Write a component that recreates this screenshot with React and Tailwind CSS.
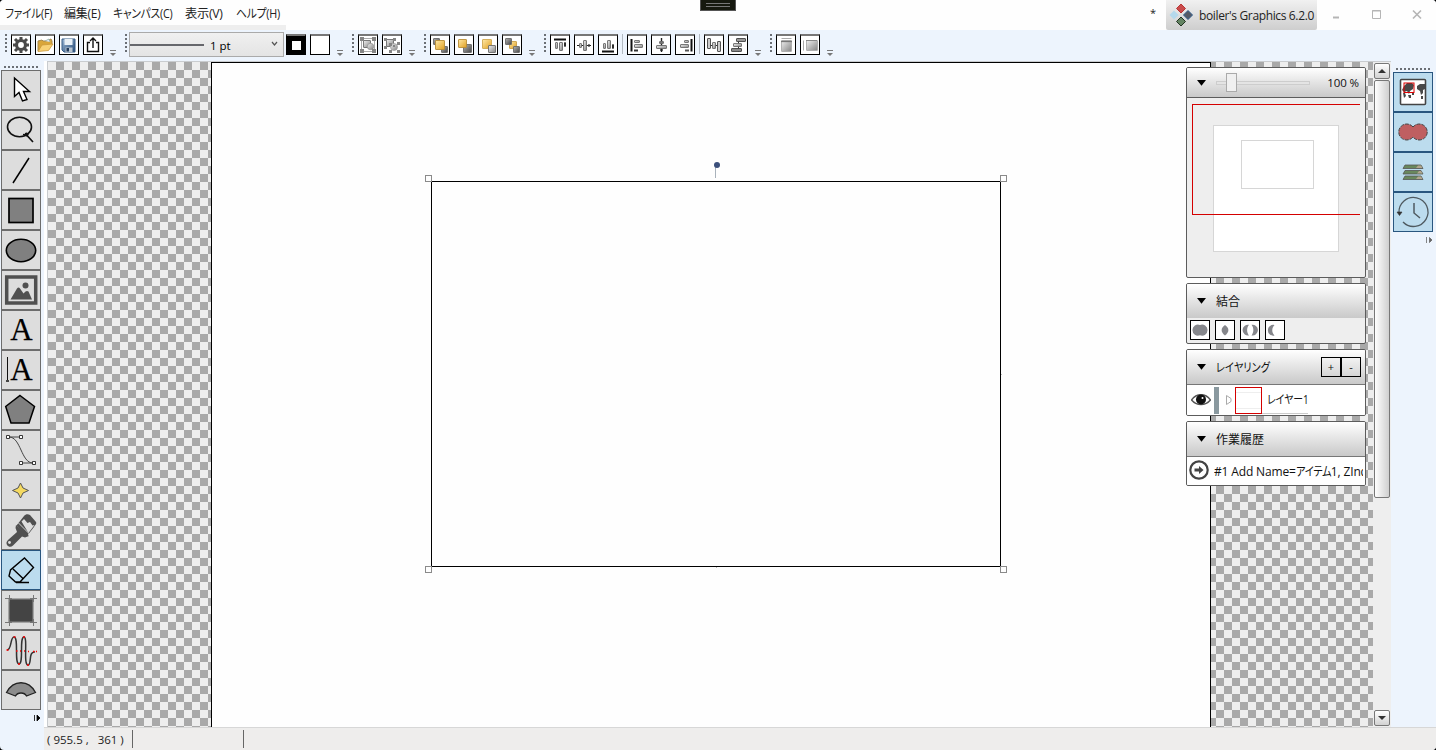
import React from "react";

const S = ({ w = 20, h = w, vb, children, className = "" }) => (
  <svg width={w} height={h} viewBox={vb || `0 0 ${w} ${h}`} fill="none" className={`block shrink-0 ${className}`}>
    {children}
  </svg>
);

const Defs = () => (
  <svg width="0" height="0" className="absolute">
    <defs>
      <linearGradient id="gray" x1="0" y1="0" x2="1" y2="1">
        <stop offset="0" stopColor="#f0f0f0" />
        <stop offset="1" stopColor="#858585" />
      </linearGradient>
      <linearGradient id="dark" x1="0" y1="0" x2="1" y2="1">
        <stop offset="0" stopColor="#b5b5b5" />
        <stop offset="1" stopColor="#444" />
      </linearGradient>
      <linearGradient id="gold" x1="0" y1="0" x2="1" y2="1">
        <stop offset="0" stopColor="#ffe9a8" />
        <stop offset="1" stopColor="#e0a021" />
      </linearGradient>
      <linearGradient id="blue" x1="0" y1="0" x2="1" y2="1">
        <stop offset="0" stopColor="#9db9d6" />
        <stop offset="1" stopColor="#274b77" />
      </linearGradient>
    </defs>
  </svg>
);

const Grip = () => (
  <div className="flex h-[18px] w-[2px] shrink-0 flex-col gap-[2px]">
    {[0, 1, 2, 3, 4].map((i) => (
      <div key={i} className="h-[2px] w-[2px] shrink-0 bg-[#6b6f75]" />
    ))}
  </div>
);

const Overflow = () => (
  <S w={8} h={24} className="ml-[1px] mr-[5px]">
    <path d="M2 16.500h6" stroke="#777" />
    <path d="M2 19h6l-3 3z" fill="#777" />
  </S>
);

const Sep = () => <div className="h-5 w-px shrink-0 bg-[#b3bac2]" />;

const Btn = ({ children }) => (
  <button className="flex h-[21px] w-5 shrink-0 items-center justify-center border border-t-2 border-black border-t-[#777] bg-white">
    {children}
  </button>
);

const Sq = ({ x, y, s = 7, h = s, f = "url(#gray)", st = "#6a6a6a" }) => (
  <rect x={x + 0.5} y={y + 0.5} width={s} height={h} rx=".4" fill={f} stroke={st} strokeWidth=".9" />
);

const I = ({ children }) => <S w={18} h={18}>{children}</S>;

const group1 = [
  <I>
    <circle cx="9" cy="9" r="4.500" stroke="#4a4a4a" strokeWidth="3.200" />
    <path d="M9 1v3M9 14v3M1 9h3M14 9h3M3 3l2.500 2.500M12.500 12.500l2.500 2.500M3 15l2.500-2.500M12.500 5.500l2.500-2.500" stroke="#4a4a4a" strokeWidth="3" />
  </I>,
  <I>
    <path d="M2 15V5l4-1 1 1h3l5-2 1 2v4" fill="#d9a63a" stroke="#a5884d" />
    <path d="M9 5l4-2 1 3" fill="#dce8f5" stroke="#8aa" strokeWidth=".7" />
    <path d="M2 15.500L6 9l11-1-4.500 6.500z" fill="#f8d277" stroke="#cb9838" strokeWidth=".8" />
  </I>,
  <I>
    <path d="M2 3h13v13H4l-2-2z" fill="url(#blue)" stroke="#345a85" />
    <path d="M4.500 3h8v6h-8z" fill="#e9f0f6" />
    <path d="M5.500 11.500h7V16h-7z" fill="#b8c4cf" />
    <path d="M6.500 12h2.500v3.500H6.500z" fill="#223b5c" />
  </I>,
  <I>
    <path d="M6 6.500H3.500v9h11v-9H12M9 12V2M6 5l3-3 3 3" stroke="#111" strokeWidth="1.400" />
  </I>,
];

const group3 = [
  <I>
    <Sq x={4} y={4} s={7} />
    <circle cx="11.500" cy="10.500" r="3.200" fill="url(#gray)" stroke="#888" strokeWidth=".7" />
    <path d="M5 2.500h8M5 15.500h8M2.500 5v8M15.500 5v8" stroke="#aaa" />
    <path d="M1 1h4v4H1zM13 1h4v4h-4zM1 13h4v4H1zM13 13h4v4h-4z" fill="#858585" />
  </I>,
  <I>
    <Sq x={3} y={3} s={7} />
    <circle cx="11" cy="11" r="3.500" fill="url(#gray)" stroke="#999" strokeWidth=".7" />
    <path d="M1 2h3v3H1zM10 2h3v3h-3zM1 10h3v3H1zM6 7h3v3H6zM14 6h3v3h-3zM6 14h3v3H6zM14 14h3v3h-3zM10 9h2v2h-2z" fill="#858585" />
  </I>,
];

const group4 = [
  <I>
    <Sq x={2} y={2} s={6} f="url(#dark)" />
    <Sq x={10} y={10} s={6} f="url(#dark)" />
    <Sq x={4} y={4} s={9} f="url(#gold)" st="#b98d35" />
  </I>,
  <I>
    <Sq x={8} y={8} s={8} f="url(#dark)" />
    <Sq x={3} y={3} s={8} f="url(#gold)" st="#b98d35" />
  </I>,
  <I>
    <Sq x={3} y={3} s={9} f="url(#gold)" st="#d0a850" />
    <Sq x={9} y={9} s={7} f="url(#gray)" />
  </I>,
  <I>
    <Sq x={6} y={5} s={7} f="url(#gold)" st="#c99e46" />
    <Sq x={2} y={2} s={6} f="url(#dark)" />
    <Sq x={10} y={10} s={6} f="url(#dark)" />
  </I>,
];

const group5a = [
  <I>
    <path d="M3 3.500h12" stroke="#111" strokeWidth="2" />
    <Sq x={4} y={6} s={2} h={6} /><Sq x={8} y={6} s={3} h={8} /><Sq x={13} y={6} s={1} h={4} f="#222" st="#222" />
  </I>,
  <I>
    <path d="M2 9.500h14" stroke="#222" />
    <Sq x={4} y={7} s={2} h={4} /><Sq x={8} y={4} s={3} h={10} /><Sq x={13} y={8} s={1} h={2} f="#222" st="#333" />
  </I>,
  <I>
    <path d="M3 15.500h12" stroke="#111" strokeWidth="2" />
    <Sq x={4} y={7} s={2} h={5} /><Sq x={8} y={4} s={3} h={8} /><Sq x={13} y={8} s={1} h={4} f="#222" st="#222" />
  </I>,
];
const group5b = [
  <I>
    <path d="M3.500 3v12.500" stroke="#111" strokeWidth="2" />
    <Sq x={6} y={4} s={5} h={2} /><Sq x={6} y={8} s={8} h={3} /><path d="M6 14.500h4" stroke="#333" strokeWidth="2" />
  </I>,
  <I>
    <path d="M9.500 2v14" stroke="#222" strokeWidth="1.400" />
    <Sq x={7} y={5} s={4} h={2} f="#777" /><Sq x={4} y={9} s={10} h={3} /><Sq x={8} y={13} s={2} h={1} f="#222" st="#222" />
  </I>,
  <I>
    <path d="M15.500 3v12.500" stroke="#111" strokeWidth="2" />
    <Sq x={8} y={4} s={4} h={2} /><Sq x={4} y={8} s={8} h={3} /><path d="M9 14.500h4" stroke="#555" strokeWidth="2" />
  </I>,
];
const group5c = [
  <I>
    <path d="M2 9.500h14" stroke="#333" />
    <Sq x={2} y={2} s={3} h={10} f="#ccc" st="#444" /><Sq x={7} y={6} s={3} h={6} /><Sq x={12} y={5} s={3} h={10} f="#ccc" st="#444" />
  </I>,
  <I>
    <path d="M9.500 2v14" stroke="#333" />
    <Sq x={7} y={2} s={9} h={3} f="#999" st="#444" /><Sq x={4} y={7} s={8} h={3} /><Sq x={2} y={12} s={10} h={3} f="#888" st="#444" />
  </I>,
];
const group6 = [
  <I>
    <path d="M4.500 2.500h10" stroke="#aaa" />
    <Sq x={4} y={4} s={10} h={11} st="#aaa" />
    <path d="M4 5.500h11" stroke="#777" strokeWidth="1.300" />
  </I>,
  <I>
    <path d="M2.500 4.500v10" stroke="#aaa" />
    <Sq x={5} y={4} s={11} h={10} st="#aaa" />
    <path d="M5 4.500h11" stroke="#888" />
  </I>,
];

const btns = (list) => list.map((icon, i) => <Btn key={i}>{icon}</Btn>);

const Toolbar = () => (
  <div className="flex h-[31px] shrink-0 items-start gap-1 pl-[5px] pt-1">
    <Grip />{btns(group1)}<Overflow />
    <div className="mr-[-2px]"><Grip /></div>
    <div className="mt-[-2px] mr-[-2px] flex h-[25px] w-[155px] shrink-0 items-center border border-[#aaa] bg-gradient-to-b from-[#f0f0f0] to-[#e4e4e4] text-black">
      <div className="mt-px h-[2px] w-[74px] bg-[#66676c]" />
      <span className="ml-[6px] pt-[2px] text-[11.500px]">1 pt</span>
      <S w={7} h={7} className="ml-auto mr-[5px] mb-[3px]"><path d="M1 2l2.500 3L6 2" stroke="#555" strokeWidth="1.200" /></S>
    </div>
    <Btn>
      <div className="flex h-[18px] w-[18px] items-center justify-center bg-black">
        <div className="h-[9px] w-[9px] bg-white" />
      </div>
    </Btn>
    <Btn />
    <Overflow />
    <Grip />{btns(group3)}<Overflow />
    <Grip />{btns(group4)}<Overflow />
    <Grip />{btns(group5a)}<Sep />{btns(group5b)}<Sep />{btns(group5c)}<Overflow />
    <Grip />{btns(group6)}<Overflow />
  </div>
);

const T = ({ children }) => <S w={38} h={38}>{children}</S>;
const Letter = () => (
  <text x="19.500" y="29" textAnchor="middle" fontFamily="Liberation Serif, serif" fontSize="31" fill="#000" stroke="#000" strokeWidth=".25">A</text>
);

const tools = [
  <T><path d="M12.500 7v18.500l4.500-4 3.500 8.500 4.500-1.500-3.500-8h6z" fill="#fff" stroke="#000" strokeWidth="1.400" /></T>,
  <T>
    <ellipse cx="17.500" cy="16" rx="12" ry="9.700" stroke="#111" strokeWidth="1.600" />
    <path d="M21 23.500l4 1 6 6.500" stroke="#111" strokeWidth="1.700" /><circle cx="24.500" cy="23.500" r="2" fill="#111" />
  </T>,
  <T><path d="M11 32L27 7" stroke="#000" strokeWidth="1.500" /></T>,
  <T><rect x="7" y="7.500" width="24" height="24" fill="#808080" stroke="#000" strokeWidth="1.700" /></T>,
  <T><ellipse cx="19" cy="19.500" rx="14.700" ry="11.200" fill="#808080" stroke="#000" strokeWidth="1.600" /></T>,
  <T>
    <rect x="4.700" y="6" width="29" height="26" stroke="#505050" strokeWidth="3.500" />
    <path d="M8.500 28.500l6.500-11c1-1.300 2-1.300 3 0l3.500 5 2-2c1-.8 2-.8 3 0l3.500 8z" fill="#505050" />
    <circle cx="23.500" cy="14.500" r="3" fill="#505050" />
  </T>,
  <T><Letter /></T>,
  <T><Letter /><path d="M5.500 6v23" stroke="#111" /><path d="M4 30h3" stroke="#111" strokeWidth="1.500" /></T>,
  <T><path d="M18 4.500L32.500 15.500 27 32H9L3.700 15.500z" fill="#808080" stroke="#000" strokeWidth="1.500" /></T>,
  <T>
    <path d="M7 6c12 0 12 26 24 26M7 6h12M19 32h12" stroke="#444" />
    <path d="M4.500 4.500h3v3h-3zM17.500 4.500h3v3h-3zM17.500 30.500h3v3h-3zM30.500 30.500h3v3h-3z" fill="#fff" stroke="#222" strokeWidth=".9" />
  </T>,
  <T><path d="M18.500 12l2.500 5 5.500 2.500-5.500 2.500-2.500 5-2.500-5-5.500-2.500 5.500-2.500z" fill="#f5da61" stroke="#555" /></T>,
  <T>
    <path d="M14.500 14.500L22 5c1.500-2 4-2.300 6-1l6 7c1 2-1 3-2 5l-7 9z" fill="#505050" />
    <path d="M19.500 10.500l2.500-2.500 3.500 4 2.500-1 2.500 3.500 2-.5-6 8z" fill="#ddd" />
    <path d="M14 14l13 11-4 1.500-3-1-9 9c-2 2-4.500 1.500-6-.5-1-2-.5-3.500 1-5l9-8-1.500-4z" fill="#505050" />
    <path d="M16.500 12l11 11" stroke="#ddd" strokeWidth=".9" /><circle cx="7.500" cy="31.500" r="1.400" fill="#ddd" />
  </T>,
  <T>
    <path d="M22.500 7l9 9.500L18 31h-4.500L7 25l1.500-6zM11 18l10 9.500M14 31.500h13" stroke="#000" strokeWidth="1.400" />
  </T>,
  <T>
    <rect x="7" y="8" width="24" height="23" fill="#444" stroke="#808080" strokeWidth="1.200" />
    <path d="M3 7.500h7M28 7.500h7M3 31.500h7M28 31.500h7M7.500 4v7M31.500 4v7M7.500 28v7M31.500 28v7" stroke="#777" />
  </T>,
  <T>
    <path d="M5 19c5 0 3-13 7-13 5 0 0 27 5 27s0-27 5-27c4 0-1 28 4 28 4 0 0-14 7-13" stroke="#333" strokeWidth="1.500" />
    <path d="M4.500 19h2M11.500 6h2M16 33h2M21 6h2M25 34h2M31 20.500h1.500M34 20.500h1M14 20h1.500M18 20h1M22 20h1M26 20.500h1" stroke="#f00" strokeWidth="1.400" />
  </T>,
  <T><path d="M4.500 21.500c7-13 22-13 29 0l-9 3.500c-2-4-9-4-11 0z" fill="#8c8c8c" stroke="#222" strokeWidth="1.300" /></T>,
];

const HGrip = () => (
  <div className="flex h-[2px] gap-[2px]">
    {Array.from({ length: 9 }, (_, i) => (
      <div key={i} className="h-[2px] w-[2px] bg-[#6b6f75]" />
    ))}
  </div>
);

const LeftBar = () => (
  <div className="flex w-[44px] shrink-0 flex-col pl-px">
    <div className="flex h-[9px] items-start pl-[3px] pt-[5px]"><HGrip /></div>
    {tools.map((icon, i) => (
      <button key={i} className={i === 12
        ? "flex h-10 w-10 shrink-0 items-center justify-center border border-[#29567f] bg-[#bcdcee]"
        : "flex h-10 w-10 shrink-0 items-center justify-center border border-[#6d6d6d] bg-[#ddd]"}>
        {icon}
      </button>
    ))}
    <S w={8} h={8} className="ml-8 mt-1"><path d="M1.500 1v6M4 1l3 3-3 3z" fill="#000" stroke="#000" strokeWidth=".8" /></S>
  </div>
);

const sideIcons = [
  <T>
    <rect x="6.500" y="6.500" width="25" height="25" rx="1" fill="#fff" stroke="#444" strokeWidth="1.600" />
    <path d="M10 13l3-3h5l2 2-1 4-3 2-1 3-2-3-3 1-2-2zM23 13l3-2h5v5l-2 1v3l-2 2-1-4-3-2zM14 22h3v3h-2zM9 20h2l1 3-2 2zM27 23h2v3h-2zM18 20h2v2h-2z" fill="#484848" />
    <rect x="10" y="10" width="10" height="9.500" stroke="#e00000" />
  </T>,
  <T>
    <path d="M19 14a8 8 0 1 0 0 10a8 8 0 1 0 0-10z" fill="#bf5f61" stroke="#444" strokeDasharray="4 1" />
  </T>,
  <T>
    <g fill="#69885d" stroke="#555" strokeWidth=".8">
      <path d="M9 15.500l2-3.500h16l2 3.500zM9 21l2-3.500h16l2 3.500zM9 26.500l2-3.500h16l2 3.500z" />
    </g>
    <path d="M22 15l2-2.500h3l1.500 2.500zM23 20.500l2-2.500h2l1.500 2.500zM22 26l2-2.500h3l1.500 2.500z" fill="#b2a68e" />
  </T>,
  <T>
    <path d="M5 20a14.500 14.500 0 1 1 4 9" stroke="#4f5a60" strokeWidth="1.300" />
    <path d="M3 19h5l-2.500 3.500z" fill="#333" stroke="#333" strokeWidth=".6" /><path d="M20 10v10l6 5" stroke="#4f5a60" strokeWidth="1.500" />
  </T>,
];

const RightBar = () => (
  <div className="flex w-[43px] shrink-0 flex-col">
    <div className="flex h-[11px] items-start pl-[3px] pt-[7px]"><HGrip /></div>
    {sideIcons.map((icon, i) => (
      <button key={i} className="flex h-10 w-10 shrink-0 items-center justify-center border border-[#29567f] bg-[#bcdcee]">
        {icon}
      </button>
    ))}
    <S w={8} h={8} className="ml-8 mt-1"><path d="M1.500 1v6M4.500 1.500l2.500 2.500-2.500 2.500z" fill="#666" stroke="#666" strokeWidth=".8" /></S>
  </div>
);

const Tri = () => <S w={9} h={6}><path d="M0 0h9L4.500 5.800z" fill="#000" /></S>;

const Header = ({ children, className }) => (
  <div className={`flex shrink-0 items-center bg-gradient-to-b from-white to-[#c9c9c9] pl-[10px] ${className}`}>
    <Tri />
    {children}
  </div>
);

const Panel = ({ children, className }) => (
  <section className={`flex flex-col overflow-hidden rounded-[2px] border border-[#5c5c5c] bg-[#eee] ${className}`}>{children}</section>
);

const combine = [
  <S w={18}><path d="M9 4a5.500 5.500 0 1 0 0 10.200a5.500 5.500 0 1 0 0-10.200z" fill="#85868b" /></S>,
  <S w={18}><path d="M9 4c4.500 3 4.500 7 0 10.500c-4.500-3.500-4.500-7.500 0-10.500z" fill="#85868b" /></S>,
  <S w={18}>
    <path d="M8 3.800a5.400 5.400 0 1 0 0 10.600c-2.500-3-2.500-7.600 0-10.600zM10.500 3.800a5.400 5.400 0 1 1 0 10.600c2.500-3 2.500-7.600 0-10.600z" fill="#85868b" />
  </S>,
  <S w={18}><path d="M8.500 4a5.400 5.400 0 1 0 0 10.500c-3-3-3-7.500 0-10.500z" fill="#85868b" /></S>,
];

const Panels = () => (
  <div className="absolute left-[1138px] top-[5px] flex w-[180px] flex-col gap-[5px] text-[12px] text-[#111]">
    <Panel className="h-[211px]">
      <Header className="h-[30px] border-b border-[#5c5c5c]">
        <div className="relative ml-[10px] flex h-[19px] w-[94px] items-center">
          <div className="h-1 w-full border border-[#cdcdcd] bg-[#e4e4e4]" />
          <div className="absolute left-[10px] top-0 h-[19px] w-[11px] border border-[#aaa] bg-[#f0f0f0]" />
        </div>
        <span className="ml-auto mr-[6px] whitespace-pre pt-px text-[11.500px] tracking-[-0.1px]">100 %</span>
      </Header>
      <div className="relative flex-1">
        <div className="absolute left-[26px] top-[27px] h-[127px] w-[126px] border border-[#d6d6d6] bg-white" />
        <div className="absolute left-[54px] top-[42px] h-[49px] w-[73px] border border-[#d6d6d6]" />
        <div className="absolute left-[5px] top-[6px] h-[111px] w-[168px] border border-r-0 border-[#d40000]" />
      </div>
    </Panel>
    <Panel className="h-[61px]">
      <Header className="h-[34px]"><span className="ml-[10px] pt-[2px]">結合</span></Header>
      <div className="flex gap-[5px] pl-[3px] pt-[2px]">
        {combine.map((icon, i) => (
          <button key={i} className="flex h-5 w-5 items-center justify-center border border-black bg-white">{icon}</button>
        ))}
      </div>
    </Panel>
    <Panel className="h-[67px]">
      <Header className="h-[35px] border-b border-[#777]">
        <span className="ml-[10px] origin-left scale-x-[0.85] whitespace-nowrap pt-[2px] [font-feature-settings:'palt']">レイヤリング</span>
        <div className="ml-auto mr-[4px] flex text-[11px]">
          <button className="flex h-5 w-5 items-center justify-center border border-black pt-px">+</button>
          <button className="flex h-5 w-5 items-center justify-center border border-black pt-px">-</button>
        </div>
      </Header>
      <div className="flex flex-1 items-center bg-white pl-1">
        <S w={20} h={14}>
          <path d="M.5 7c5-7 14-7 19 0c-5 6-14 6-19 0z" stroke="#555" strokeWidth="1.400" />
          <circle cx="10" cy="6.500" r="5" fill="#111" /><circle cx="11.500" cy="5" r="1" fill="#fff" />
        </S>
        <div className="ml-[3px] h-[27px] w-[5px] bg-[#8a999f]" />
        <S w={6} h={10} className="ml-[7px]"><path d="M.5.500v9L5 6.500v-3z" stroke="#aaa" /></S>
        <div className="ml-[3px] h-[27px] w-[27px] shrink-0 bg-[#d40000] p-px">
          <div className="flex h-full flex-col justify-center bg-white">
            <div className="h-px bg-[#eee]" />
            <div className="h-[15px]" />
            <div className="h-px bg-[#eee]" />
          </div>
        </div>
        <div className="flex h-[27px] w-[46px] items-center border-b border-[#ccc] pl-[5px]">
          <span className="origin-left scale-x-[0.82] whitespace-nowrap pt-px [font-feature-settings:'palt']">レイヤー1</span>
        </div>
      </div>
    </Panel>
    <Panel className="h-[65px]">
      <Header className="h-[35px] border-b border-[#777]"><span className="ml-[10px] pt-[2px]">作業履歴</span></Header>
      <div className="flex flex-1 items-center overflow-hidden bg-white pl-[2px] pr-[2px]">
        <S w={20} className="mb-[2px]">
          <circle cx="10" cy="10" r="8.700" stroke="#444" strokeWidth="2.200" />
          <path d="M5.500 8.500H10V6l4.500 4-4.500 4v-2.500H5.500z" fill="#444" />
        </S>
        <div className="ml-[5px] w-[149px] overflow-hidden whitespace-nowrap pt-px tracking-[-0.15px] [font-feature-settings:'palt']">
          #1 Add Name=<span className="mr-[-7px] inline-block origin-left scale-x-[0.84]">アイテム</span>1, ZInde
        </div>
      </div>
    </Panel>
  </div>
);

const Handle = ({ className }) => <div className={`absolute h-[7px] w-[7px] border border-[#8a8a8a] ${className}`} />;

const Canvas = () => (
  <div className="relative w-[1325px] shrink-0 overflow-hidden bg-[#eee] bg-[conic-gradient(#eeeeee_25%,#a9a9a9_0_50%,#eeeeee_0_75%,#a9a9a9_0)] bg-[length:16px_16px] bg-[position:8px_0px]">
    <div className="ml-[163px] h-full w-[1000px] border border-b-0 border-black bg-[#fefefe]" />
    <div className="absolute left-[383px] top-[119px] h-[386px] w-[570px] border border-black" />
    <Handle className="left-[377px] top-[113px]" />
    <Handle className="left-[952px] top-[113px]" />
    <Handle className="left-[377px] top-[504px]" />
    <Handle className="left-[952px] top-[504px]" />
    <div className="absolute left-[667px] top-[102px] h-[14px] w-px bg-[#a9b2bb]" />
    <div className="absolute left-[665.5px] top-[99.5px] h-[6px] w-[6px] rounded-full bg-[#3b4f7b]" />
    <div className="absolute left-[953px] top-[312px] h-px w-px bg-[#bbb]" />
    <div className="absolute left-[668px] top-[505px] h-px w-px bg-[#bbb]" />
    <Panels />
  </div>
);

const Arrow = ({ up }) => (
  <div className="flex h-4 w-4 shrink-0 items-center justify-center rounded-[2px] border border-[#777] bg-gradient-to-b from-white to-[#d2d2d2]">
    <S w={8} h={4}><path d={up ? "M0 4h8L4 0z" : "M0 0h8L4 4z"} fill="#333" /></S>
  </div>
);

const ScrollBar = () => (
  <div className="flex w-[18px] shrink-0 flex-col items-start bg-[#eee] pl-px pb-px pt-px">
    <Arrow up />
    <div className="mt-px h-[418px] w-4 rounded-[2px] border border-[#777] bg-gradient-to-r from-white to-[#cfcfcf]" />
    <div className="flex-1" />
    <Arrow />
  </div>
);

const menus = [
  ["ファイル(F)", "w-[59px]", "scale-x-[0.887]"],
  ["編集(E)", "w-[49px]", "scale-x-100"],
  ["キャンパス(C)", "w-[72px]", "scale-x-[0.895]"],
  ["表示(V)", "w-[51px]", "scale-x-[1.02]"],
  ["ヘルプ(H)", "w-[50px]", "scale-x-[0.9]"],
];

const TitleBar = () => (
  <header className="relative flex h-[30px] shrink-0 bg-[#fefefe]">
    <div className="h-full w-[286px] shrink-0 border-b-[5px] border-[#eee]">
      <nav className="flex h-[25px] items-center pl-[5px] pt-[2px] text-[12px] text-[#222] [font-feature-settings:'palt']">
        {menus.map(([label, w, scale]) => (
          <span key={label} className={`shrink-0 origin-left whitespace-nowrap tracking-[-0.25px] ${w} ${scale}`}>{label}</span>
        ))}
      </nav>
    </div>
    <div className="absolute left-[700px] top-0 flex h-[11px] w-9 flex-col items-center gap-px border border-t-0 border-[#555] bg-[#16190f] pt-[3px]">
      <div className="h-px w-6 bg-[#777]" />
      <div className="mt-px h-px w-6 bg-[#777]" />
    </div>
    <span className="ml-auto mr-[10px] pt-[5px] text-[11px] text-[#222]">*</span>
    <div className="flex w-[151px] items-center rounded-b-[2px] bg-gradient-to-b from-[#f1f1f1] to-[#cecece] pl-[3px] text-[12px] text-[#222]">
      <S w={24} h={24}>
        <path d="M12 1l4.500 4.500L12 10 7.500 5.500z" fill="#c94c4c" stroke="#b33" />
        <path d="M5 7.500l4.700 4.500L5 16.500.500 12z" fill="#b5d9ec" />
        <path d="M19 7.500l4.500 4.500-4.500 4.500-4.500-4.500z" fill="#555a66" stroke="#2f5a8a" />
        <path d="M12 14l4.500 4.500L12 23l-4.500-4.500z" fill="#648463" stroke="#232" />
      </S>
      <span className="ml-[6px] whitespace-nowrap pt-px tracking-[-0.36px]">boiler's Graphics 6.2.0</span>
    </div>
    <div className="flex w-[119px] items-center">
      <S w={119} h={30}>
        <path d="M16 17.500h6" stroke="#b5b5b5" strokeWidth="2" />
        <path d="M55.500 10.500h8v8h-8zM55 11h9" stroke="#b5b5b5" />
        <path d="M96 10.500l8 8M104 10.500l-8 8" stroke="#b5b5b5" strokeWidth="1.600" />
      </S>
    </div>
  </header>
);

export default function App() {
  return (
    <div className="h-[750px] w-[1436px] overflow-hidden bg-black font-['Open_Sans','Noto_Sans_CJK_JP',sans-serif]">
      <Defs />
      <div className="flex h-full flex-col overflow-hidden rounded-[4px] bg-[#edf4fd]">
        <TitleBar />
        <Toolbar />
        <div className="flex min-h-0 flex-1">
          <LeftBar />
          <div className="flex min-w-0 flex-1 flex-col">
            <main className="flex h-[666px] shrink-0 bg-[#edf4fd]">
              <div className="w-[3px] shrink-0 bg-white" />
              <div className="flex shrink-0 border-l border-t border-[#c9cccf]">
                <Canvas />
                <ScrollBar />
              </div>
              <div className="w-[2px] shrink-0" />
              <RightBar />
            </main>
            <footer className="flex flex-1 items-center border-t border-[#d7d7d7] bg-[#eeedec] text-[11.500px] text-[#222]">
              <span className="ml-[3px] w-[85px] whitespace-pre pt-[2px]">( 955.5 ,   361 )</span>
              <div className="h-[18px] w-px bg-[#666]" />
              <div className="ml-[110px] h-[18px] w-px bg-[#666]" />
            </footer>
          </div>
        </div>
      </div>
    </div>
  );
}
